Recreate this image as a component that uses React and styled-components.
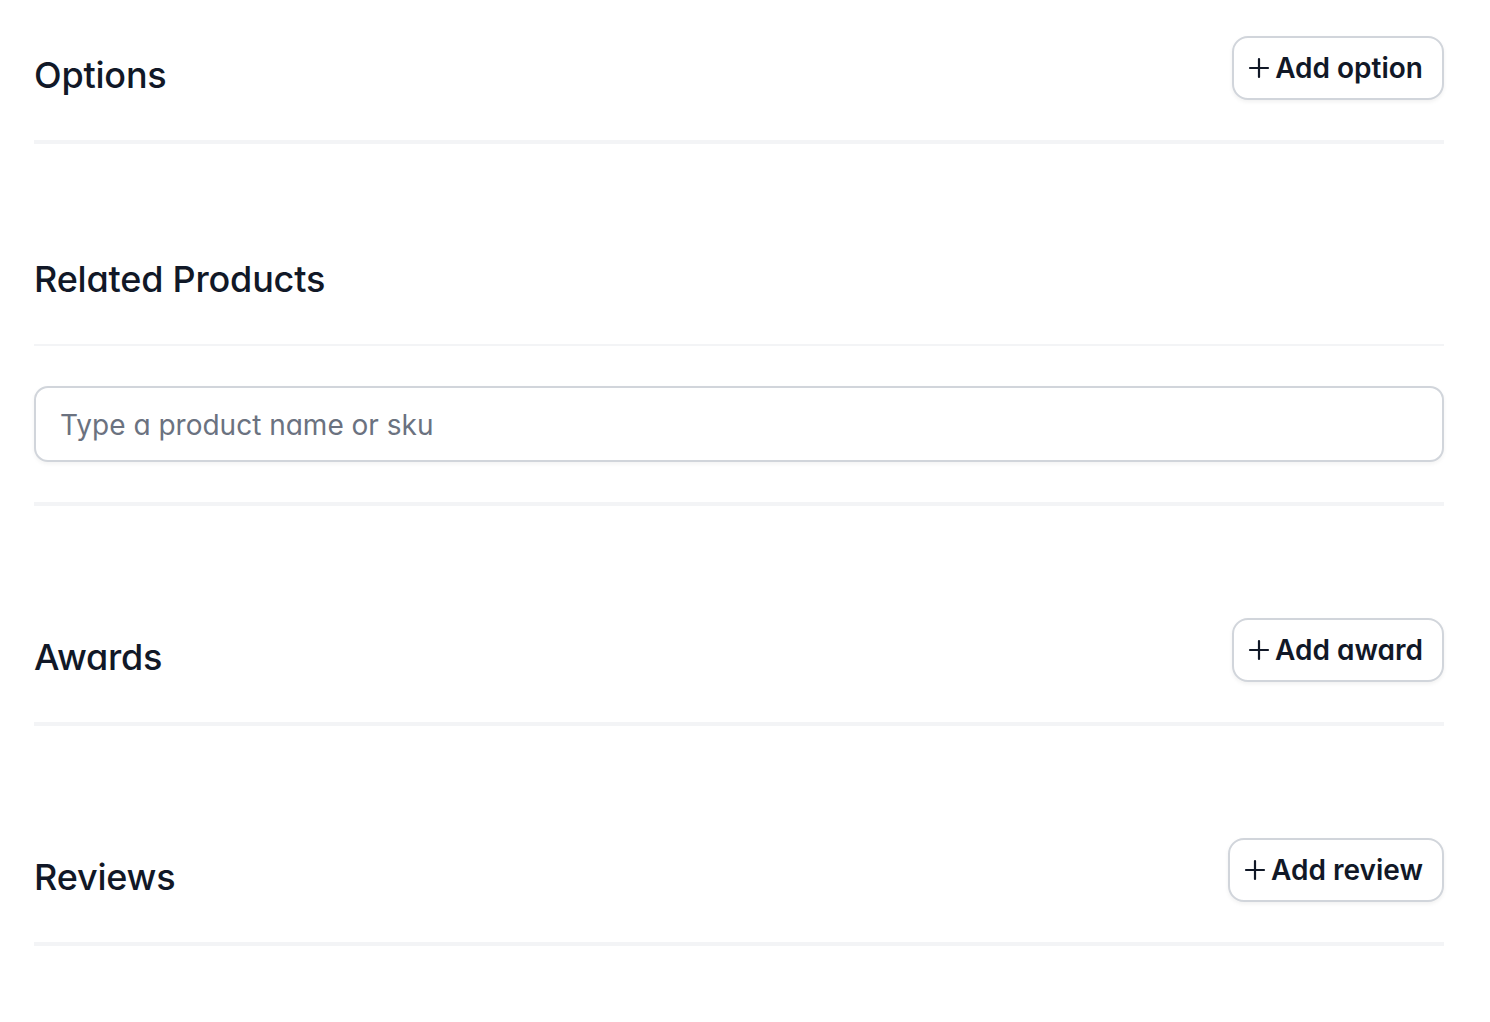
import React from "react";
import styled, { createGlobalStyle } from "styled-components";

const GlobalStyle = createGlobalStyle`
  html, body {
    margin: 0;
    padding: 0;
    background: #ffffff;
  }
  body {
    font-family: Inter, "Noto Sans", sans-serif;
    font-feature-settings: "cv11";
    color: #111827;
  }
`;

const Page = styled.div`
  width: 1410px;
  padding: 36px 0 0 34px;
`;

const Section = styled.section`
  margin-top: ${(props) => props.gap || "0px"};
  padding-bottom: 40px;
  border-bottom: ${(props) => props.line || "4px"} solid #f3f4f6;
`;

const Header = styled.div`
  display: flex;
  justify-content: space-between;
  align-items: flex-end;
  min-height: 64px;
`;

const Title = styled.h2`
  margin: 0;
  font-size: 36px;
  line-height: 50px;
  font-weight: 500;
  color: #111827;
  letter-spacing: -0.2px;
`;

const AddButton = styled.button`
  display: flex;
  align-items: center;
  gap: 4px;
  height: 64px;
  padding: 0 19px 0 13px;
  background: #ffffff;
  border: 2px solid #d1d5db;
  border-radius: 16px;
  box-shadow: 0 2px 4px rgba(0, 0, 0, 0.06);
  font-family: Inter, "Noto Sans", sans-serif;
  font-feature-settings: "cv11";
  font-size: 28px;
  font-weight: 600;
  color: #111827;
  cursor: pointer;
`;

const Block = styled.div`
  padding: 40px 0;
  border-bottom: 4px solid #f3f4f6;
`;

const SearchInput = styled.input`
  box-sizing: border-box;
  display: block;
  width: 100%;
  height: 76px;
  padding: 2px 24px 0;
  border: 2px solid #d1d5db;
  border-radius: 14px;
  box-shadow: 0 2px 4px rgba(0, 0, 0, 0.05);
  font-family: Inter, "Noto Sans", sans-serif;
  font-feature-settings: "cv11";
  font-size: 28px;
  color: #111827;
  outline: none;

  &::placeholder {
    color: #6b7280;
  }
`;

const Plus = () => (
  <svg width="24" height="24" viewBox="0 0 24 24" fill="none">
    <path
      d="M12 3v18M3 12h18"
      stroke="#111827"
      strokeWidth="2.2"
      strokeLinecap="round"
    />
  </svg>
);

const App = () => {
  return (
    <>
      <GlobalStyle />
      <Page>
        <Section>
          <Header>
            <Title>Options</Title>
            <AddButton>
              <Plus />
              Add option
            </AddButton>
          </Header>
        </Section>

        <Section gap="96px" line="2px">
          <Header>
            <Title>Related Products</Title>
          </Header>
        </Section>
        <Block>
          <SearchInput placeholder="Type a product name or sku" />
        </Block>

        <Section gap="112px">
          <Header>
            <Title>Awards</Title>
            <AddButton>
              <Plus />
              Add award
            </AddButton>
          </Header>
        </Section>

        <Section gap="112px">
          <Header>
            <Title>Reviews</Title>
            <AddButton>
              <Plus />
              Add review
            </AddButton>
          </Header>
        </Section>
      </Page>
    </>
  );
};

export default App;
